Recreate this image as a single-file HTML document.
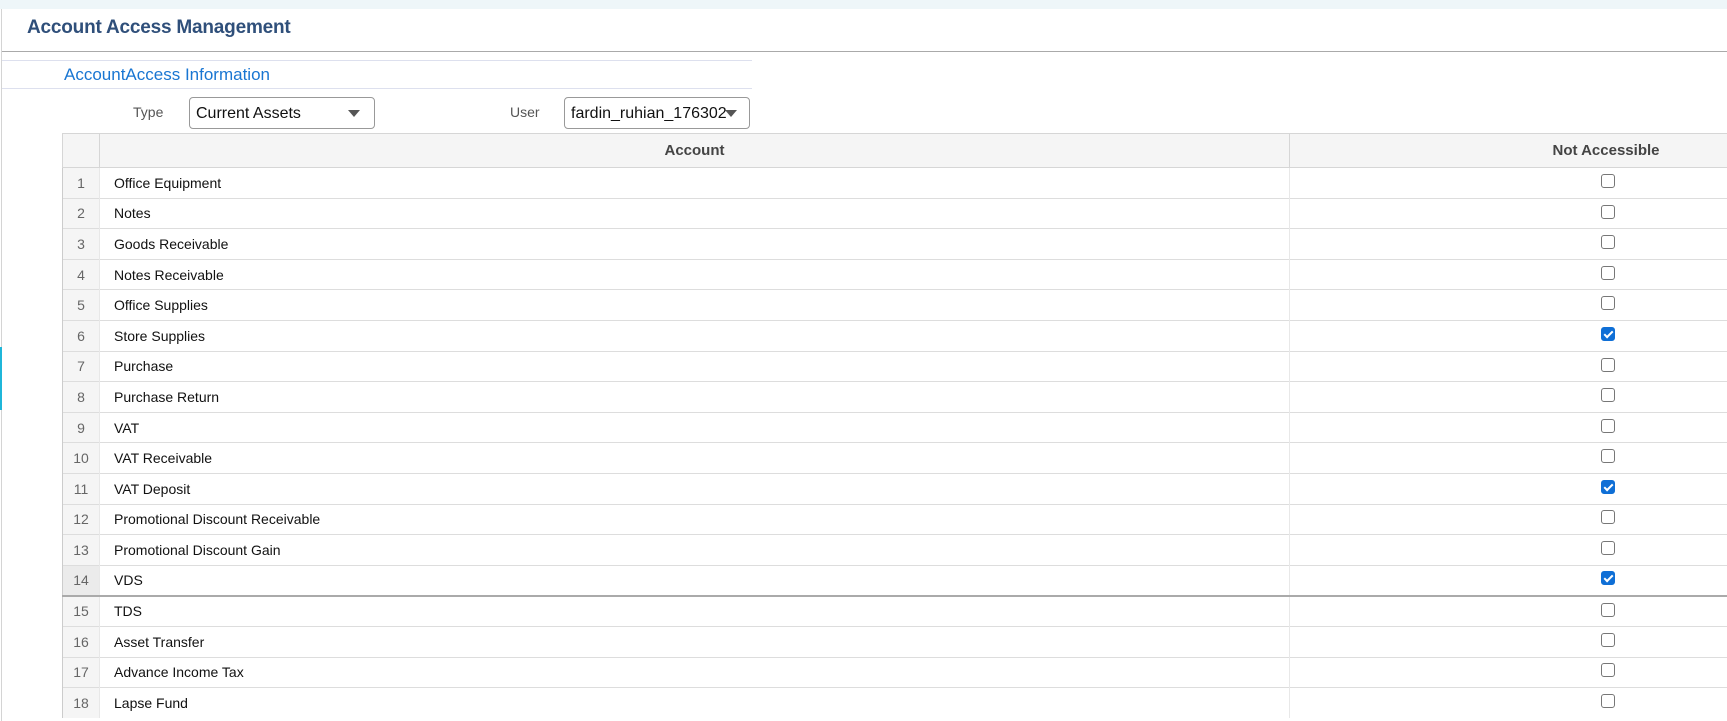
<!DOCTYPE html>
<html><head><meta charset="utf-8"><style>
*{box-sizing:border-box;margin:0;padding:0}
html,body{width:1727px;height:721px;overflow:hidden;background:#fff;font-family:"Liberation Sans",Arial,sans-serif;position:relative}
.top{position:absolute;left:0;top:0;width:1727px;height:9px;background:#eef6f9}
.lb{position:absolute;left:1px;top:9px;width:1px;height:712px;background:#d4d4d4}
.teal{position:absolute;left:0;top:347px;width:2px;height:63px;background:#1fb6d9}
.title{position:absolute;left:27px;top:17px;font-size:19px;color:#2f4f7a;font-weight:bold;letter-spacing:-0.2px}
.hb{position:absolute;left:2px;top:51px;width:1725px;height:1px;background:#aaa}
.l1{position:absolute;left:2px;top:60px;width:750px;height:1px;background:#dde0ee}
.l2{position:absolute;left:2px;top:88px;width:750px;height:1px;background:#dde0ee}
.sub{position:absolute;left:64px;top:65px;font-size:17px;color:#1976d2}
.lab{position:absolute;top:104px;font-size:14px;color:#555}
.sel{position:absolute;top:97px;height:32px;border:1px solid #999;border-radius:4px;font-size:16px;color:#111;padding:7px 0 0 6px;overflow:hidden;white-space:nowrap;background:#fff}
.tri{position:absolute;width:0;height:0;border-left:6px solid transparent;border-right:6px solid transparent;border-top:7px solid #555;top:12px}
table{position:absolute;left:62px;top:133px;border-collapse:collapse;width:1860px;table-layout:fixed;font-size:14px;color:#111}
th{background:#f5f5f5;height:34px;font-size:15px;color:#444;border:1px solid #d6d6d6;font-weight:bold}
td{height:30.6px;border-top:1px solid #ddd;border-left:1px solid #e8e8e8;padding:0}
td.n{background:#f5f5f5;color:#666;text-align:center;font-size:14px;border-left:1px solid #ccc}
td.a{padding-left:14px}
td.c{text-align:center;padding-left:0}
.cb{display:inline-block;width:14px;height:14px;border:1px solid #777;border-radius:3px;vertical-align:middle;position:relative;left:2px;top:-3px}
.cb.on{background:#0f6fd6;border-color:#0f6fd6}
.cb.on:after{content:"";position:absolute;left:4px;top:1px;width:3px;height:7px;border:solid #fff;border-width:0 2px 2px 0;transform:rotate(45deg)}
tr.s td{border-bottom:2px solid #aaa}
tr.s td.n{background:#ebebeb}
</style></head><body>
<div class="top"></div><div class="lb"></div><div class="teal"></div>
<div class="title">Account Access Management</div>
<div class="hb"></div>
<div class="l1"></div><div class="sub">AccountAccess Information</div><div class="l2"></div>
<div class="lab" style="left:133px">Type</div>
<div class="sel" style="left:189px;width:186px">Current Assets<span class="tri" style="left:158px"></span></div>
<div class="lab" style="left:510px">User</div>
<div class="sel" style="left:564px;width:186px">fardin_ruhian_176302<span class="tri" style="left:160px"></span></div>
<table>
<colgroup><col style="width:37px"><col style="width:1190px"><col style="width:633px"></colgroup>
<tr><th></th><th>Account</th><th>Not Accessible</th></tr>
<tr><td class="n">1</td><td class="a">Office Equipment</td><td class="c"><span class="cb"></span></td></tr>
<tr><td class="n">2</td><td class="a">Notes</td><td class="c"><span class="cb"></span></td></tr>
<tr><td class="n">3</td><td class="a">Goods Receivable</td><td class="c"><span class="cb"></span></td></tr>
<tr><td class="n">4</td><td class="a">Notes Receivable</td><td class="c"><span class="cb"></span></td></tr>
<tr><td class="n">5</td><td class="a">Office Supplies</td><td class="c"><span class="cb"></span></td></tr>
<tr><td class="n">6</td><td class="a">Store Supplies</td><td class="c"><span class="cb on"></span></td></tr>
<tr><td class="n">7</td><td class="a">Purchase</td><td class="c"><span class="cb"></span></td></tr>
<tr><td class="n">8</td><td class="a">Purchase Return</td><td class="c"><span class="cb"></span></td></tr>
<tr><td class="n">9</td><td class="a">VAT</td><td class="c"><span class="cb"></span></td></tr>
<tr><td class="n">10</td><td class="a">VAT Receivable</td><td class="c"><span class="cb"></span></td></tr>
<tr><td class="n">11</td><td class="a">VAT Deposit</td><td class="c"><span class="cb on"></span></td></tr>
<tr><td class="n">12</td><td class="a">Promotional Discount Receivable</td><td class="c"><span class="cb"></span></td></tr>
<tr><td class="n">13</td><td class="a">Promotional Discount Gain</td><td class="c"><span class="cb"></span></td></tr>
<tr class="s"><td class="n">14</td><td class="a">VDS</td><td class="c"><span class="cb on"></span></td></tr>
<tr><td class="n">15</td><td class="a">TDS</td><td class="c"><span class="cb"></span></td></tr>
<tr><td class="n">16</td><td class="a">Asset Transfer</td><td class="c"><span class="cb"></span></td></tr>
<tr><td class="n">17</td><td class="a">Advance Income Tax</td><td class="c"><span class="cb"></span></td></tr>
<tr><td class="n">18</td><td class="a">Lapse Fund</td><td class="c"><span class="cb"></span></td></tr>
</table>
</body></html>
